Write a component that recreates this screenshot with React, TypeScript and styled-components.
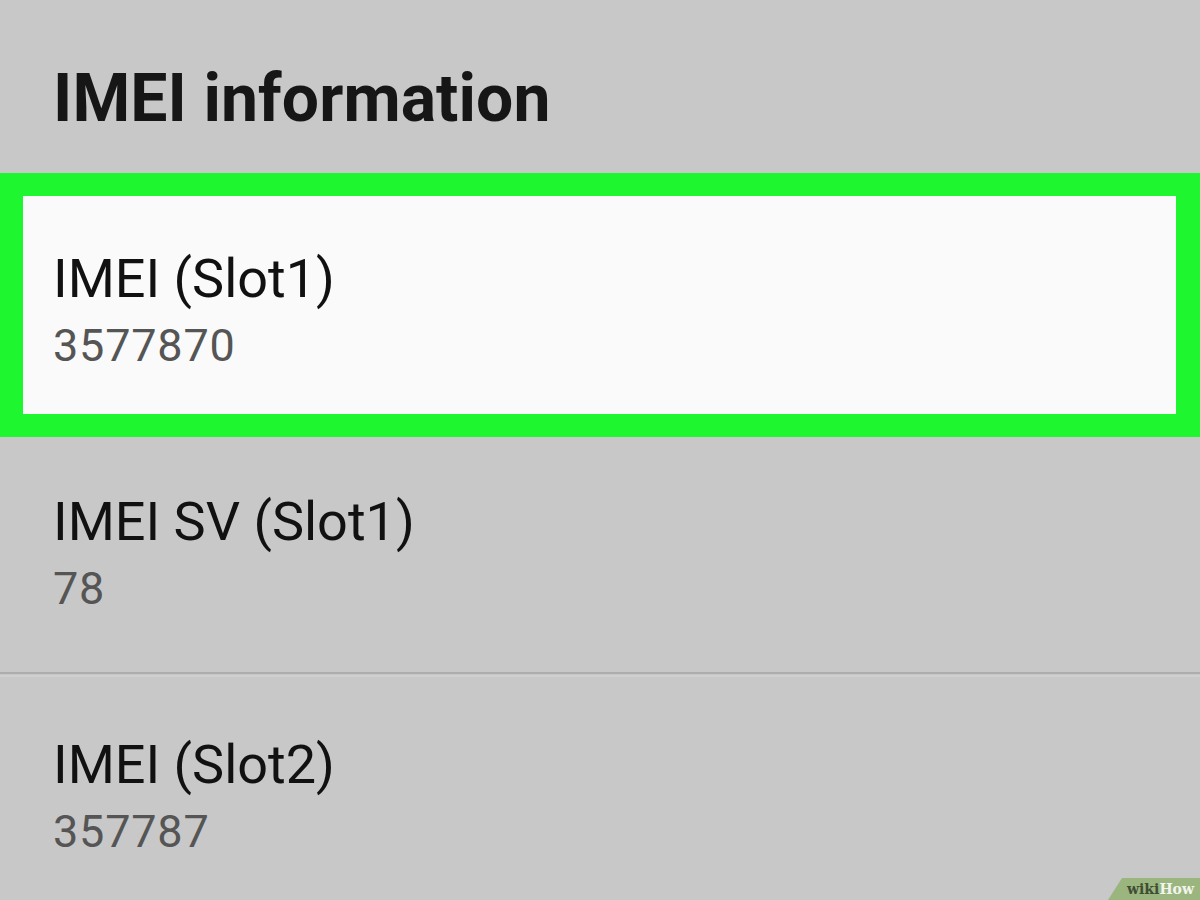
import React from "react";
import styled, { createGlobalStyle } from "styled-components";

const Global = createGlobalStyle`
  html, body { margin: 0; padding: 0; }
  body {
    background: #c8c8c8;
    font-family: Roboto, "Noto Sans", "Liberation Sans", sans-serif;
    overflow: hidden;
  }
`;

const Screen = styled.div`
  position: relative;
  width: 1200px;
  height: 900px;
  background: #c8c8c8;
  display: flex;
  flex-direction: column;
  overflow: hidden;
  & > * { flex-shrink: 0; }
`;

const Header = styled.header`
  height: 173px;
  box-sizing: border-box;
  padding: 66px 0 0 53px;
`;

const Title = styled.h1`
  margin: 0;
  font-size: 66px;
  line-height: 1;
  font-weight: 700;
  color: #161616;
  letter-spacing: 0.1px;
`;

const Highlight = styled.div`
  border: 23px solid #1ef72f;
  border-right-width: 24px;
  background: #fafafa;
`;

const Row = styled.div<{ $top: number; $bottom: number; $left: number }>`
  display: flex;
  flex-direction: column;
  padding: ${(p) => p.$top}px 0 ${(p) => p.$bottom}px ${(p) => p.$left}px;
`;

const Label = styled.div`
  font-size: 54px;
  line-height: 1;
  font-weight: 400;
  color: #111;
`;

const Value = styled.div`
  margin-top: 17px;
  font-size: 45px;
  line-height: 1;
  font-weight: 400;
  color: #555;
  letter-spacing: 0.8px;
`;

const Divider = styled.hr`
  margin: 0;
  border: 0;
  height: 2px;
  background: #adadad;
  box-shadow: 0 3px 0 #cfcfcf;
`;

const Watermark = styled.div`
  position: absolute;
  right: 0;
  bottom: 0;
  width: 92px;
  height: 22px;
  background: #9bb57f;
  clip-path: polygon(14px 0, 100% 0, 100% 100%, 0 100%);
  display: flex;
  align-items: center;
  justify-content: flex-end;
  padding-right: 6px;
  box-sizing: border-box;
  font-family: "DejaVu Serif", "Liberation Serif", serif;
  font-weight: 700;
  font-size: 14px;
`;

const WikiPart = styled.span<{ $light?: boolean }>`
  color: ${(p) => (p.$light ? "#f2f5ee" : "#3e4d33")};
`;

const rows = [
  { label: "IMEI SV (Slot1)", value: "78", top: 58, bottom: 61 },
  { label: "IMEI (Slot2)", value: "357787", top: 64, bottom: 60 },
];

export default function App() {
  return (
    <Screen>
      <Global />
      <Header>
        <Title>IMEI information</Title>
      </Header>
      <Highlight>
        <Row $top={56} $bottom={46} $left={30}>
          <Label>IMEI (Slot1)</Label>
          <Value>3577870</Value>
        </Row>
      </Highlight>
      <Row $top={rows[0].top} $bottom={rows[0].bottom} $left={53}>
        <Label>{rows[0].label}</Label>
        <Value>{rows[0].value}</Value>
      </Row>
      <Divider />
      <Row $top={rows[1].top} $bottom={rows[1].bottom} $left={53}>
        <Label>{rows[1].label}</Label>
        <Value>{rows[1].value}</Value>
      </Row>
      <Watermark>
        <WikiPart>wiki</WikiPart>
        <WikiPart $light>How</WikiPart>
      </Watermark>
    </Screen>
  );
}
